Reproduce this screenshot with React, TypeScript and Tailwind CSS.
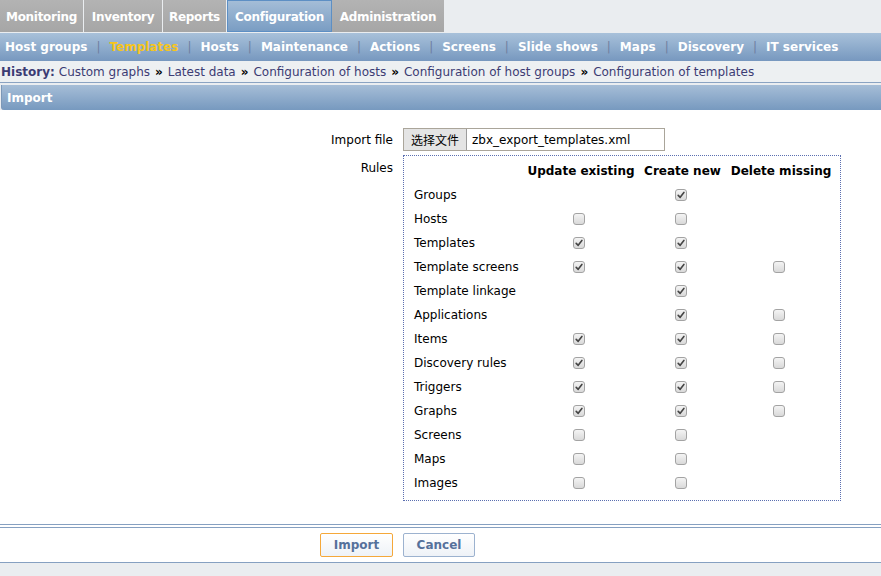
import React from 'react';

const tabs: [string, string][] = [
  ['Monitoring', 'w-[83px] mr-px'],
  ['Inventory', 'w-[78px] mr-px'],
  ['Reports', 'w-[63px] mr-px'],
  ['Configuration', 'w-[105px]'],
  ['Administration', 'w-[112px]'],
];
const subNav = ['Host groups', 'Templates', 'Hosts', 'Maintenance', 'Actions', 'Screens', 'Slide shows', 'Maps', 'Discovery', 'IT services'];
const history = ['Custom graphs', 'Latest data', 'Configuration of hosts', 'Configuration of host groups', 'Configuration of templates'];

// null = no checkbox, true = checked, false = unchecked
type Cell = boolean | null;
const rules: [string, Cell, Cell, Cell][] = [
  ['Groups', null, true, null],
  ['Hosts', false, false, null],
  ['Templates', true, true, null],
  ['Template screens', true, true, false],
  ['Template linkage', null, true, null],
  ['Applications', null, true, false],
  ['Items', true, true, false],
  ['Discovery rules', true, true, false],
  ['Triggers', true, true, false],
  ['Graphs', true, true, false],
  ['Screens', false, false, null],
  ['Maps', false, false, null],
  ['Images', false, false, null],
];

const colW = ['w-[110px]', 'w-[93px]', 'w-[104px]'];

const Check: React.FC<{ checked: boolean }> = ({ checked }) => (
  <span className="inline-flex h-[12px] w-[12px] items-center justify-center rounded-[3px] border border-[#a3a3a3] bg-gradient-to-b from-[#f4f4f4] to-[#d9d9d9]">
    {checked && (
      <svg viewBox="0 0 10 10" className="h-[8px] w-[8px]">
        <path d="M1.5 5.4 L4 7.9 L8.6 1.8" fill="none" stroke="#454545" strokeWidth="2" strokeLinecap="round" strokeLinejoin="round" />
      </svg>
    )}
  </span>
);

export default function App() {
  return (
    <div className="flex min-h-[576px] w-[881px] flex-col bg-[#eaedf0] font-['DejaVu_Sans',sans-serif] text-[12px] text-black">
      {/* Top tabs */}
      <div className="flex h-[33px] items-start">
        {tabs.map(([t, w]) => (
          <div
            key={t}
            className={`${w} flex h-[32px] items-center justify-center pt-[2px] text-[12px] font-bold tracking-[-0.3px] text-white ${
              t === 'Configuration'
                ? 'border border-[#5d8fc4] bg-gradient-to-b from-[#a4bdd7] to-[#7a9dc3]'
                : 'bg-gradient-to-b from-[#b3b3b3] to-[#a6a6a6]'
            }`}
          >
            {t}
          </div>
        ))}
      </div>

      {/* Sub navigation */}
      <div className="flex h-[28px] items-center bg-gradient-to-b from-[#a8c1da] to-[#7798bf] pl-[5px] text-[12px] font-bold text-white">
        {subNav.map((s, i) => (
          <React.Fragment key={s}>
            {i > 0 && <span className="mx-[9px] font-normal text-[#6f7ea0]">|</span>}
            <span className={s === 'Templates' ? 'text-[#f7c51b]' : ''}>{s}</span>
          </React.Fragment>
        ))}
      </div>

      {/* History */}
      <div className="flex h-[22px] items-center border-b border-[#8aa3c2] bg-[#edf0f2] pl-px text-[12px] text-[#3c3c74]">
        <span className="mr-[4px] font-bold">History:</span>
        {history.map((h, i) => (
          <React.Fragment key={h}>
            {i > 0 && <span className="mx-[5px] font-bold text-black">»</span>}
            <span>{h}</span>
          </React.Fragment>
        ))}
      </div>

      <div className="h-[2px]" />

      {/* Import header */}
      <div className="ml-px flex h-[25px] items-center rounded-bl-[3px] border-l border-[#7c98b8] bg-gradient-to-b from-[#a6bed7] to-[#7799bf] pl-[5px] text-[12px] font-bold text-white">
        Import
      </div>

      {/* Form */}
      <div className="flex h-[414px] flex-col bg-white pt-[18px]">
        <div className="flex items-center">
          <div className="w-[403px] pr-[10px] text-right">Import file</div>
          <div className="flex h-[23px] w-[262px] items-stretch border border-[#aaa59a] bg-white">
            <div className="flex items-center border-r border-[#9c9c9c] bg-[#e4e4e4] px-[7px] font-['Noto_Sans_CJK_SC',sans-serif] text-[12px]">选择文件</div>
            <div className="flex items-center pl-[5px]">zbx_export_templates.xml</div>
          </div>
        </div>

        <div className="mt-[4px] flex">
          <div className="w-[403px] pt-[4px] pr-[10px] text-right">Rules</div>
          <div className="w-[438px] border border-dotted border-[#5b6fb0] pl-[10px] pt-[3px] pb-[5px]">
            <div className="flex h-[24px] items-center font-bold">
              <div className="w-[112px]" />
              <div className={`${colW[0]} text-center`}>Update existing</div>
              <div className={`${colW[1]} text-center`}>Create new</div>
              <div className={`${colW[2]} text-center`}>Delete missing</div>
            </div>
            {rules.map(([name, u, c, d]) => (
              <div key={name} className="flex h-[24px] items-center">
                <div className="w-[112px]">{name}</div>
                {[u, c, d].map((v, i) => (
                  <div key={i} className={`${colW[i]} flex justify-center pr-[4px]`}>
                    {v !== null && <Check checked={v} />}
                  </div>
                ))}
              </div>
            ))}
          </div>
        </div>
      </div>

      {/* Footer */}
      <div className="h-[4px] border-y border-[#86a0c1] bg-white" />
      <div className="flex h-[35px] items-center gap-[10px] border-b border-[#86a0c1] bg-white pl-[320px]">
        <button className="h-[24px] w-[73px] rounded-[2px] border border-[#f5a83a] bg-gradient-to-b from-white to-[#eef2f7] text-[12px] font-bold text-[#56719b]">Import</button>
        <button className="h-[24px] w-[72px] rounded-[2px] border border-[#9cb2cf] bg-gradient-to-b from-white to-[#eef2f7] text-[12px] font-bold text-[#56719b]">Cancel</button>
      </div>
    </div>
  );
}
